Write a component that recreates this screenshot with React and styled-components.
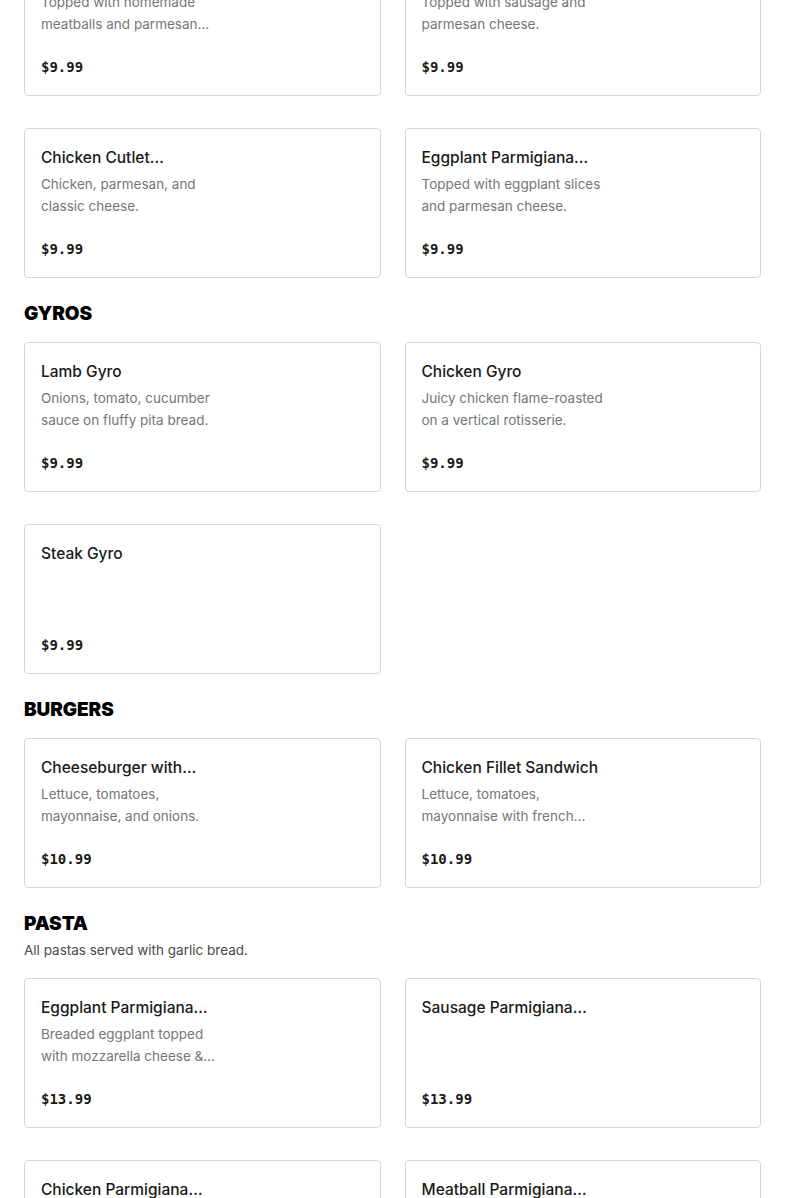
import React from 'react';
import styled, { createGlobalStyle } from 'styled-components';

const GlobalStyle = createGlobalStyle`
  * { box-sizing: border-box; }
  body {
    margin: 0;
    background: #ffffff;
    font-family: Inter, "Liberation Sans", Arial, sans-serif;
    color: #191919;
  }
`;

// page is shown scrolled part-way into the menu
const Page = styled.div`
  padding: 0 24px 24px;
  margin-top: -54px;
`;

const Section = styled.section`
  & + & {
    margin-top: 24px;
  }
`;

const Heading = styled.h2`
  margin: 0 0 ${props => (props.$tight ? '3px' : '16px')};
  font-family: Inter, "Liberation Sans", sans-serif;
  font-size: 19px;
  line-height: 24px;
  font-weight: 900;
  letter-spacing: -0.1px;
  color: #000000;
  text-transform: uppercase;
`;

const Subtitle = styled.p`
  margin: 0 0 17px;
  font-size: 13.5px;
  line-height: 22px;
  color: #494949;
`;

const Grid = styled.div`
  display: grid;
  grid-template-columns: 1fr 1fr;
  column-gap: 24px;
  row-gap: 32px;
`;

const Card = styled.div`
  height: 150px;
  padding: 16px;
  border: 1px solid #d6d6d6;
  border-radius: 4px;
  background: #ffffff;
  display: flex;
  flex-direction: column;
`;

const Title = styled.h3`
  margin: 1px 0 0;
  max-width: 185px;
  font-size: 15.5px;
  line-height: 24px;
  font-weight: 500;
  color: #191919;
  display: -webkit-box;
  -webkit-box-orient: vertical;
  -webkit-line-clamp: 1;
  overflow: hidden;
`;

const Description = styled.p`
  margin: 3px 0 0;
  max-width: 185px;
  font-size: 13.5px;
  line-height: 22px;
  color: #767676;
  display: -webkit-box;
  -webkit-box-orient: vertical;
  -webkit-line-clamp: 2;
  overflow: hidden;
`;

const Price = styled.div`
  margin-top: auto;
  font-family: "DejaVu Sans Mono", "Liberation Mono", monospace;
  font-size: 14px;
  line-height: 24px;
  font-weight: 700;
  color: #191919;
`;

const menu = [
  {
    items: [
      { name: 'Meatball Parmigiana Hero', desc: 'Topped with homemade meatballs and parmesan cheese.', price: '$9.99' },
      { name: 'Sausage Parmigiana Hero', desc: 'Topped with sausage and parmesan cheese.', price: '$9.99' },
      { name: 'Chicken Cutlet Parmigiana Hero', desc: 'Chicken, parmesan, and classic cheese.', price: '$9.99' },
      { name: 'Eggplant Parmigiana Hero', desc: 'Topped with eggplant slices and parmesan cheese.', price: '$9.99' },
    ],
  },
  {
    title: 'Gyros',
    items: [
      { name: 'Lamb Gyro', desc: 'Onions, tomato, cucumber sauce on fluffy pita bread.', price: '$9.99' },
      { name: 'Chicken Gyro', desc: 'Juicy chicken flame-roasted on a vertical rotisserie.', price: '$9.99' },
      { name: 'Steak Gyro', price: '$9.99' },
    ],
  },
  {
    title: 'Burgers',
    items: [
      { name: 'Cheeseburger with French Fries', desc: 'Lettuce, tomatoes, mayonnaise, and onions.', price: '$10.99' },
      { name: 'Chicken Fillet Sandwich', desc: 'Lettuce, tomatoes, mayonnaise with french fries.', price: '$10.99' },
    ],
  },
  {
    title: 'Pasta',
    subtitle: 'All pastas served with garlic bread.',
    items: [
      { name: 'Eggplant Parmigiana Pasta', desc: 'Breaded eggplant topped with mozzarella cheese & marinara sauce.', price: '$13.99' },
      { name: 'Sausage Parmigiana Pasta', price: '$13.99' },
      { name: 'Chicken Parmigiana Pasta', desc: 'Breaded chicken cutlet topped with mozzarella cheese.', price: '$13.99' },
      { name: 'Meatball Parmigiana Pasta', desc: 'Homemade meatballs topped with mozzarella cheese.', price: '$13.99' },
    ],
  },
];

const MenuCard = ({ item }) => (
  <Card>
    <Title>{item.name}</Title>
    {item.desc && <Description>{item.desc}</Description>}
    <Price>{item.price}</Price>
  </Card>
);

const App = () => (
  <>
    <GlobalStyle />
    <Page>
      {menu.map((section, i) => (
        <Section key={i}>
          {section.title && <Heading $tight={!!section.subtitle}>{section.title}</Heading>}
          {section.subtitle && <Subtitle>{section.subtitle}</Subtitle>}
          <Grid>
            {section.items.map((item) => (
              <MenuCard key={item.name} item={item} />
            ))}
          </Grid>
        </Section>
      ))}
    </Page>
  </>
);

export default App;
